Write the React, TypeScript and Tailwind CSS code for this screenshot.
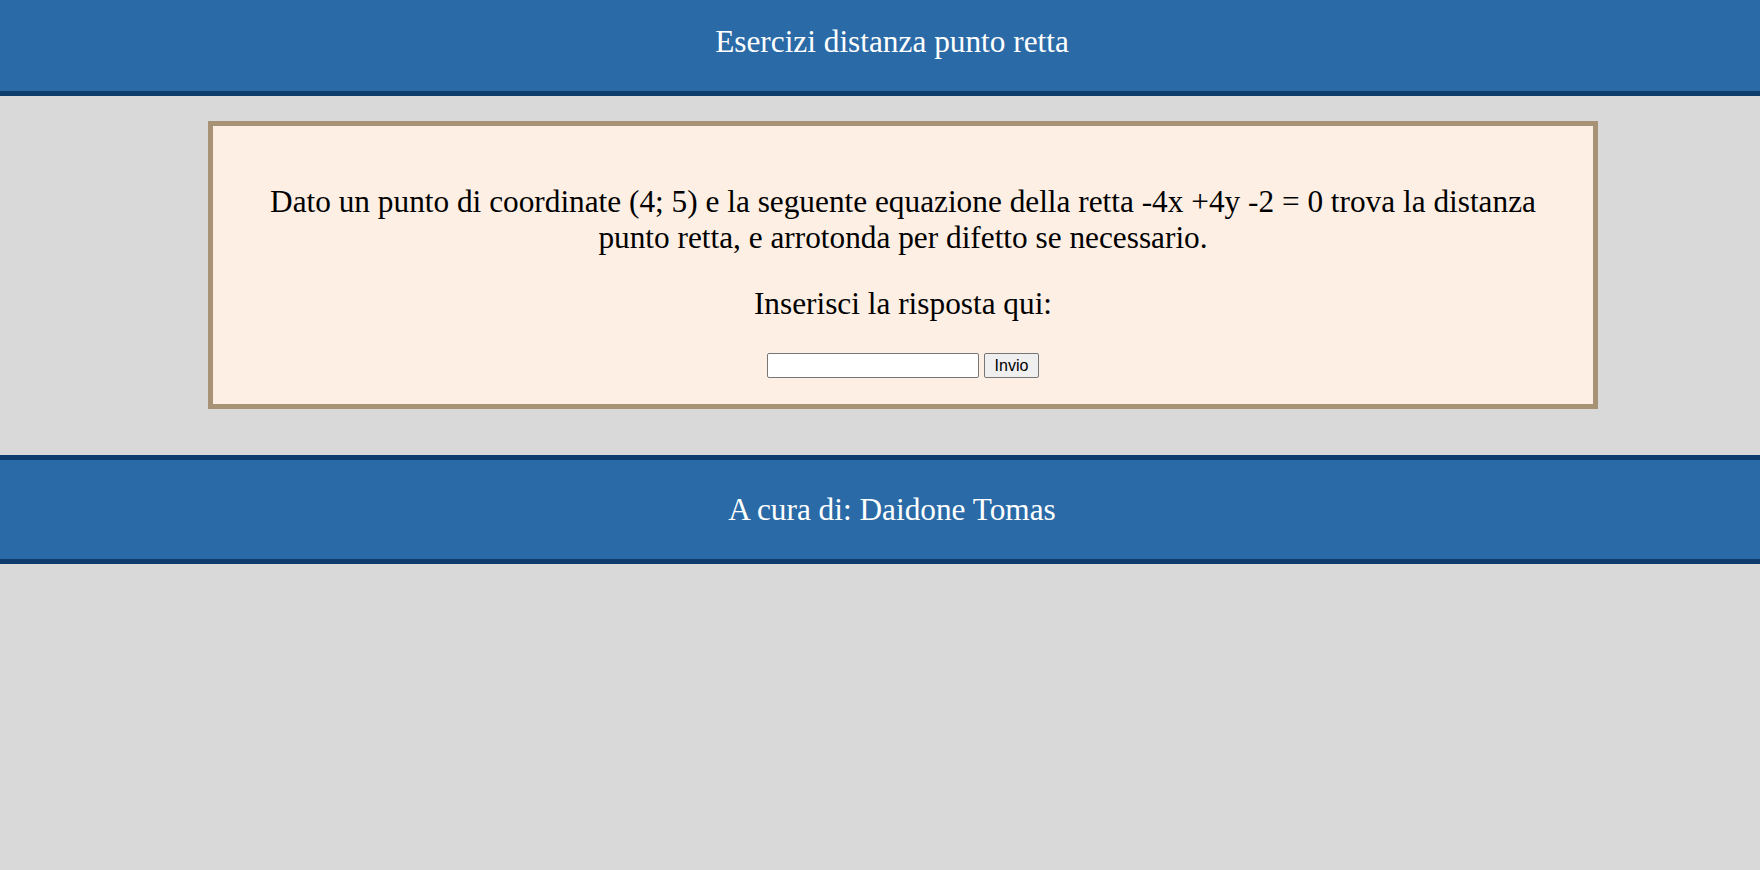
export default function App() {
  return (
    <div className="min-h-[870px] bg-[#d9d9d9] font-['Liberation_Serif',serif] text-black">
      {/* header */}
      <header className="flex h-[96px] justify-center border-b-[5px] border-[#0e3d6d] bg-[#2a6aa6] pt-[24px] pl-[24px] text-[31.3px] leading-[36px] text-white">
        Esercizi distanza punto retta
      </header>

      {/* exercise box */}
      <div className="pt-[25px] pb-[46px] pl-[208px] pr-[162px]">
        <div className="flex flex-col items-center border-[5px] border-[#a89276] bg-[#fdefe4] px-[50px] pt-[58px] pb-[26px] text-center text-[31.3px] leading-[36px]">
          <p>
            Dato un punto di coordinate (4; 5) e la seguente equazione della retta -4x +4y -2 = 0 trova la distanza punto retta, e arrotonda per difetto se necessario.
          </p>
          <p className="mt-[30px]">Inserisci la risposta qui:</p>
          <div className="mt-[31px] flex items-center gap-[5px] font-['Liberation_Sans',sans-serif] text-[15px] leading-none">
            <input
              type="text"
              className="h-[25px] w-[212px] rounded-[2px] border border-[#767676] bg-white px-1 outline-none"
            />
            <button className="h-[25px] w-[55px] rounded-[2px] border border-[#767676] bg-[#efefef] text-[16px] text-black">
              Invio
            </button>
          </div>
        </div>
      </div>

      {/* footer */}
      <footer className="flex h-[109px] items-center justify-center border-y-[5px] border-[#0e3d6d] bg-[#2a6aa6] pl-[24px] text-[31.3px] leading-[36px] text-white">
        A cura di: Daidone Tomas
      </footer>
    </div>
  );
}
